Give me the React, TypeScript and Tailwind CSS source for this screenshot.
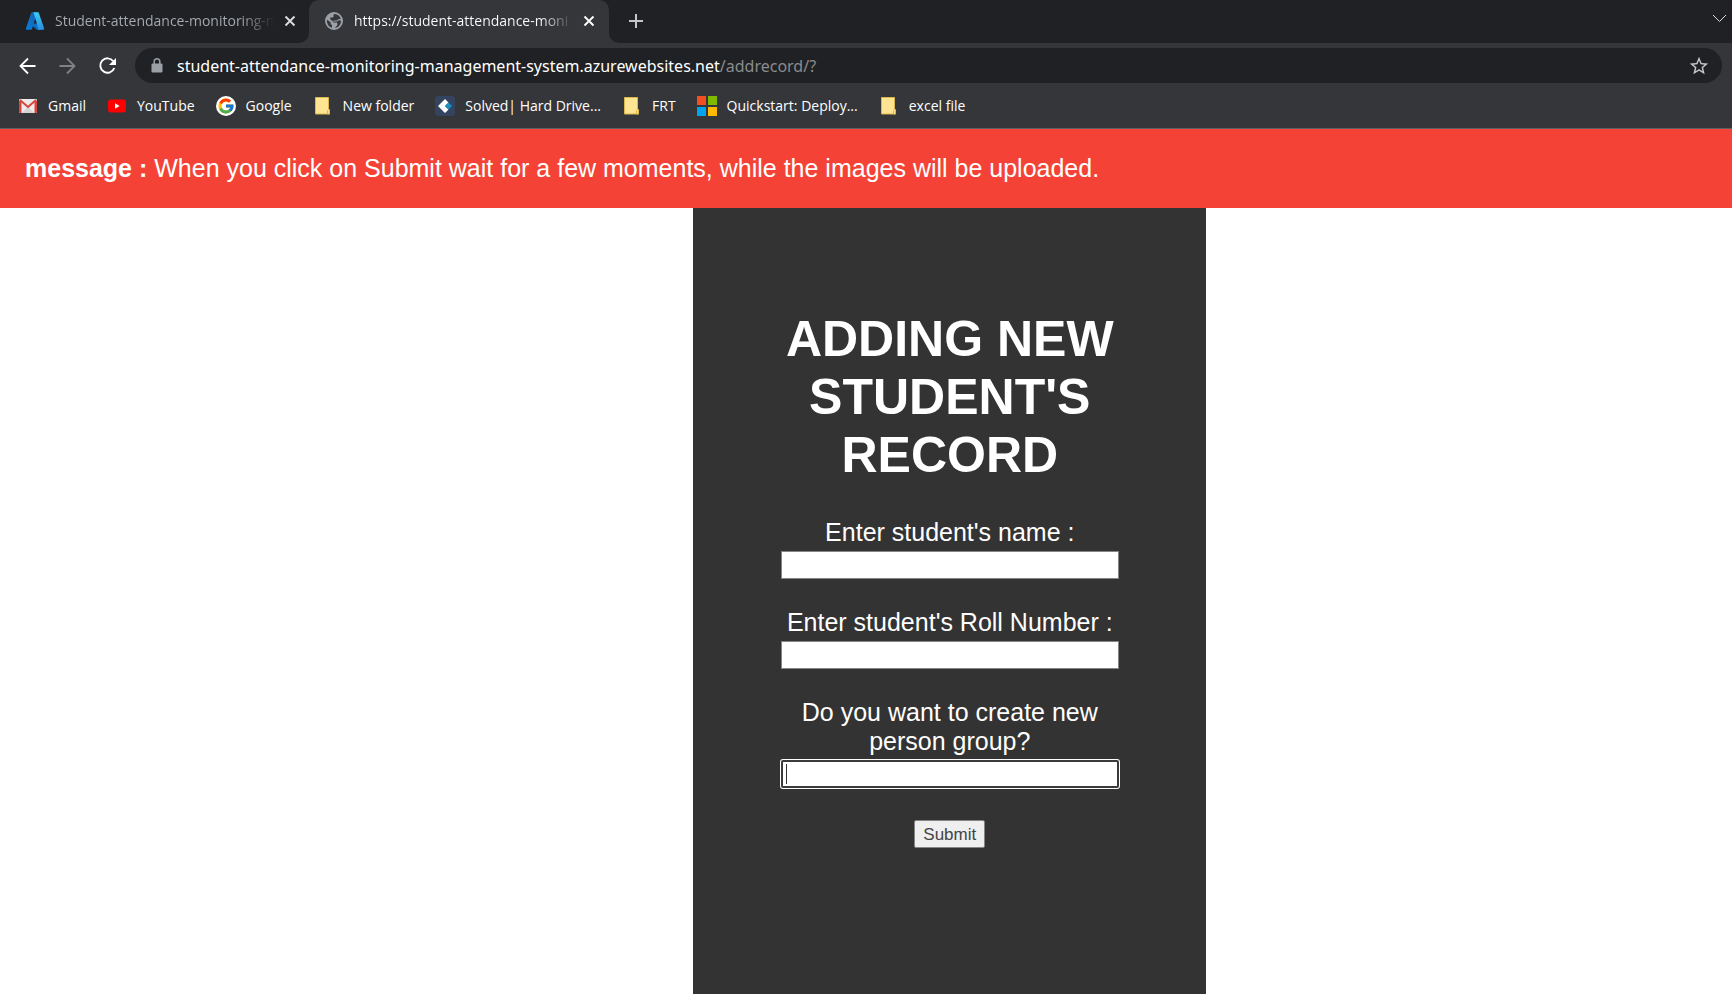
import React from "react";
import { MdStarBorder } from "react-icons/md";
import { FcGoogle } from "react-icons/fc";

function AzureIcon() {
  return (
    <svg viewBox="0 0 96 96" className="size-5 shrink-0" aria-hidden="true">
      <defs>
        <linearGradient id="azure-left" x1="0.700" y1="0" x2="0.300" y2="1">
          <stop offset="0" stopColor="#1464b4" />
          <stop offset="1" stopColor="#0a7ad6" />
        </linearGradient>
        <linearGradient id="azure-right" x1="0.400" y1="0" x2="0.600" y2="1">
          <stop offset="0" stopColor="#3ccbf4" />
          <stop offset="1" stopColor="#2892df" />
        </linearGradient>
      </defs>
      <path
        fill="url(#azure-left)"
        d="M33.300 6.500h26.100L32.300 89.800H8.100a4.100 4.100 0 0 1-3.900-5.500L29.400 9.400a4.200 4.200 0 0 1 3.900-2.900z"
      />
      <path fill="#0f6fc4" d="M71.200 60.300H29.900a1.900 1.900 0 0 0-1.300 3.300l26.500 24.800a4.200 4.200 0 0 0 2.900 1.100h23.400z" />
      <path
        fill="url(#azure-right)"
        d="M66.600 9.400a4.100 4.100 0 0 0-3.900-2.900H38a4.200 4.200 0 0 1 3.900 2.900l22 74.800a4.200 4.200 0 0 1-3.900 5.500h28.100a4.200 4.200 0 0 0 3.900-5.500z"
      />
    </svg>
  );
}

function GlobeIcon() {
  return (
    <svg viewBox="0 0 18 18" className="size-[18px] shrink-0" fill="#9aa0a6" aria-hidden="true">
      <path
        fillRule="evenodd"
        d="M9 0a9 9 0 1 0 0 18A9 9 0 0 0 9 0zM2 7.800L5.600 10.200v1.300c0 .8.700 1.400 1.400 1.400v2.900A7 7 0 0 1 2 7.800zM9.500 2.050A7 7 0 0 1 15.800 7.300L14.500 7c-.8-.2-1.200.1-1.600.6l-.7.9H9.300c-.8 0-1.200.5-1.200 1.100s.4 1 1 1h2c.8 0 1.300.5 1.300 1.200v.7c0 .5-.2.800-.6 1.200l-1.900 2.200c.8-.1 1.300-.2 1.800-.4A7 7 0 0 0 16 9.300l-1.500-1.400-2.300 1.500H8.100L5.200 7.300V5.600h2.300c.6 0 1-.4 1-1V3.500c0-.6.400-1.300 1-1.450z"
      />
    </svg>
  );
}

function LockIcon() {
  return (
    <svg viewBox="0 0 12 15" className="h-[15px] w-3 shrink-0" aria-hidden="true">
      <rect x="0.500" y="5.500" width="11" height="9" rx="1.200" fill="#9aa0a6" />
      <path d="M3.200 6V3.600a2.800 2.800 0 0 1 5.600 0V6" fill="none" stroke="#9aa0a6" strokeWidth="1.500" />
    </svg>
  );
}

function BackIcon() {
  return (
    <svg viewBox="0 0 20 20" className="size-5" fill="none" stroke="currentColor" strokeWidth="1.800" aria-hidden="true">
      <path d="M18.500 10H3.500M11 2.500L3.500 10l7.500 7.500" />
    </svg>
  );
}

function ForwardIcon() {
  return (
    <svg viewBox="0 0 20 20" className="size-5" fill="none" stroke="currentColor" strokeWidth="1.800" aria-hidden="true">
      <path d="M2.500 10h15M10 2.500l7.500 7.500-7.500 7.500" />
    </svg>
  );
}

function ReloadIcon() {
  return (
    <svg viewBox="0 0 20 20" className="size-5" aria-hidden="true">
      <path
        d="M16.300 5.200A7.200 7.200 0 1 0 17.300 12"
        fill="none"
        stroke="currentColor"
        strokeWidth="1.900"
      />
      <path d="M19 2v7h-7z" fill="currentColor" />
    </svg>
  );
}

function CloseIcon() {
  return (
    <svg viewBox="0 0 12 12" className="size-3" fill="none" stroke="currentColor" strokeWidth="1.900" aria-hidden="true">
      <path d="M1.500 1.500l9 9M10.500 1.500l-9 9" />
    </svg>
  );
}

function PlusIcon() {
  return (
    <svg viewBox="0 0 16 16" className="size-4" fill="none" stroke="currentColor" strokeWidth="2" aria-hidden="true">
      <path d="M8 1v14M1 8h14" />
    </svg>
  );
}

function GmailIcon() {
  return (
    <svg viewBox="0 0 20 20" className="size-5" aria-hidden="true">
      <rect x="1" y="3" width="18" height="14" rx="1" fill="#ececec" />
      <path d="M4 17 10 11 16 17z" fill="#d5d5d5" />
      <path d="M1 4.200V16a1 1 0 0 0 1 1h1.500V6z" fill="#d9453a" />
      <path d="M19 4.200V16a1 1 0 0 1-1 1h-1.500V6z" fill="#d9453a" />
      <path d="M2 4l8 7 8-7" fill="none" stroke="#d9453a" strokeWidth="2" />
    </svg>
  );
}

function YouTubeIcon() {
  return (
    <svg viewBox="0 0 20 20" className="size-5" aria-hidden="true">
      <rect x="1" y="3.500" width="18" height="13" rx="3" fill="#f00" />
      <path d="M8 7.300v5.400l4.600-2.700z" fill="#fff" />
    </svg>
  );
}

function GoogleIcon() {
  return (
    <span className="flex size-5 items-center justify-center rounded-full bg-white">
      <FcGoogle className="size-[18px]" />
    </span>
  );
}

function FolderIcon() {
  return (
    <svg viewBox="0 0 20 20" className="size-5" aria-hidden="true">
      <path d="M2.500 1.500h13v12h1v4.500h-14z" fill="#ffe591" stroke="#dcb64a" />
      <path d="M14.500 18v-3.500l1-1 1 .5V18z" fill="#ffe591" stroke="#dcb64a" />
    </svg>
  );
}

function SolvedIcon() {
  return (
    <svg viewBox="0 0 20 20" className="size-5" aria-hidden="true">
      <rect width="20" height="20" rx="3" fill="#34435e" />
      <path d="M10 3l3.500 3.500L10 10l3.500 3.500L10 17l-7-7z" fill="#fff" />
      <path d="M13.500 6.500 17 10l-3.500 3.500L10 10z" fill="#1a8fc4" />
    </svg>
  );
}

function MicrosoftIcon() {
  return (
    <svg viewBox="0 0 20 20" className="size-5" aria-hidden="true">
      <path d="M0 0h9v9H0z" fill="#f25022" />
      <path d="M11 0h9v9h-9z" fill="#7fba00" />
      <path d="M0 11h9v9H0z" fill="#00a4ef" />
      <path d="M11 11h9v9h-9z" fill="#ffb900" />
    </svg>
  );
}

const bookmarks = [
  { label: "Gmail", Icon: GmailIcon },
  { label: "YouTube", Icon: YouTubeIcon },
  { label: "Google", Icon: GoogleIcon },
  { label: "New folder", Icon: FolderIcon },
  { label: "Solved| Hard Drive...", Icon: SolvedIcon },
  { label: "FRT", Icon: FolderIcon },
  { label: "Quickstart: Deploy...", Icon: MicrosoftIcon },
  { label: "excel file", Icon: FolderIcon },
];

function TabStrip() {
  return (
    <div className="flex h-[43px] bg-[#202124] text-sm">
      <div className="flex w-[309px] shrink-0 items-center pb-px pl-[25px] text-[#9aa0a6]">
        <AzureIcon />
        <span className="ml-[10px] w-[219px] overflow-hidden whitespace-nowrap bg-linear-to-r from-[#a9adb2] from-85% to-transparent bg-clip-text text-transparent">
          Student-attendance-monitoring-m
        </span>
        <button aria-label="Close tab" className="ml-[10px] text-[#dadce0]">
          <CloseIcon />
        </button>
      </div>
      <div className="relative flex w-[300px] shrink-0 items-center rounded-t-[10px] bg-[#35363a] pb-px pl-4 text-white">
        <span className="absolute -left-[10px] bottom-0 size-[10px] bg-[#35363a]">
          <span className="block size-full rounded-br-[10px] bg-[#202124]" />
        </span>
        <span className="absolute -right-[10px] bottom-0 size-[10px] bg-[#35363a]">
          <span className="block size-full rounded-bl-[10px] bg-[#202124]" />
        </span>
        <GlobeIcon />
        <span className="ml-[11px] w-[219px] overflow-hidden whitespace-nowrap bg-linear-to-r from-white from-85% to-transparent bg-clip-text text-transparent">
          https://student-attendance-moni
        </span>
        <button aria-label="Close tab" className="ml-[10px]">
          <CloseIcon />
        </button>
      </div>
      <button aria-label="New tab" className="ml-[19px] pb-px text-[#c4c7ca]">
        <PlusIcon />
      </button>
      <button aria-label="Search tabs" className="mr-[5px] ml-auto self-start pt-[14px]">
        <svg viewBox="0 0 15 9" className="h-[9px] w-[15px]" fill="none" stroke="#dadce0" aria-hidden="true">
          <path d="M1 1l6.500 6.500L14 1" />
        </svg>
      </button>
    </div>
  );
}

function Toolbar() {
  return (
    <div className="flex items-center pt-[5px] pr-[10px] text-white">
      <div className="flex w-[135px] shrink-0 items-center gap-5 pl-[17px]">
        <button aria-label="Back">
          <BackIcon />
        </button>
        <button aria-label="Forward" className="text-[#808185]">
          <ForwardIcon />
        </button>
        <button aria-label="Reload">
          <ReloadIcon />
        </button>
      </div>
      <div className="flex h-[35px] flex-1 items-center rounded-full bg-[#202124] pr-3 pl-4">
        <LockIcon />
        <span className="ml-[14px] flex-1 font-['Noto_Sans',sans-serif] text-base whitespace-nowrap">
          student-attendance-monitoring-management-system.azurewebsites.net
          <span className="text-[#8a8b8e]">/addrecord/?</span>
        </span>
        <button aria-label="Bookmark this page" className="text-[#c4c7ca]">
          <MdStarBorder className="size-[22px]" />
        </button>
      </div>
    </div>
  );
}

function BookmarksBar() {
  return (
    <nav className="flex h-[45px] items-center gap-[21px] pl-[18px] text-sm text-white">
      {bookmarks.map(({ label, Icon }) => (
        <a key={label} href="#" className="flex items-center gap-[10px] whitespace-nowrap">
          <Icon />
          {label}
        </a>
      ))}
    </nav>
  );
}

function Field({ id, label, focused = false }: { id: string; label: string; focused?: boolean }) {
  return (
    <div className="mb-[29px] flex flex-col gap-1">
      <label htmlFor={id}>{label}</label>
      <div className="relative">
        <input
          id={id}
          type="text"
          className={
            focused
              ? "block h-7 w-full rounded-xs border-2 border-[#3b3b3b] bg-white px-1 text-base text-black ring-1 ring-white outline-none"
              : "block h-7 w-full border border-[#858585] bg-white px-1 text-base text-black outline-none"
          }
        />
        {focused && <span className="absolute top-1 left-[5px] h-5 w-px bg-[#333]" />}
      </div>
    </div>
  );
}

export default function App() {
  return (
    <div className="flex min-h-screen flex-col bg-white font-['Liberation_Sans',Arial,sans-serif] text-[25px] leading-[29px]">
      <header className="border-b border-[#5f6064] bg-[#35363a] font-['Open_Sans','Noto_Sans',sans-serif]">
        <TabStrip />
        <Toolbar />
        <BookmarksBar />
      </header>
      <div role="alert" className="bg-[#f44336] p-[25px] text-white">
        <strong>message :</strong> When you click on Submit wait for a few moments, while the images will be uploaded.
      </div>
      <main className="flex flex-1">
        <form
          className="ml-[40%] w-[513px] bg-[#333] pt-[102px] pr-[87px] pl-[88px] text-center text-white"
          onSubmit={(e) => e.preventDefault()}
        >
          <h1 className="mb-[34px] text-[50px] leading-[58px] font-bold">ADDING NEW STUDENT'S RECORD</h1>
          <Field id="name" label="Enter student's name :" />
          <Field id="roll" label="Enter student's Roll Number :" />
          <Field id="group" label="Do you want to create new person group?" focused />
          <button
            type="submit"
            className="mx-auto mt-8 block h-7 rounded-xs border border-[#858585] bg-[#efefef] px-2 text-[17px] leading-none text-[#444]"
          >
            Submit
          </button>
        </form>
      </main>
    </div>
  );
}
